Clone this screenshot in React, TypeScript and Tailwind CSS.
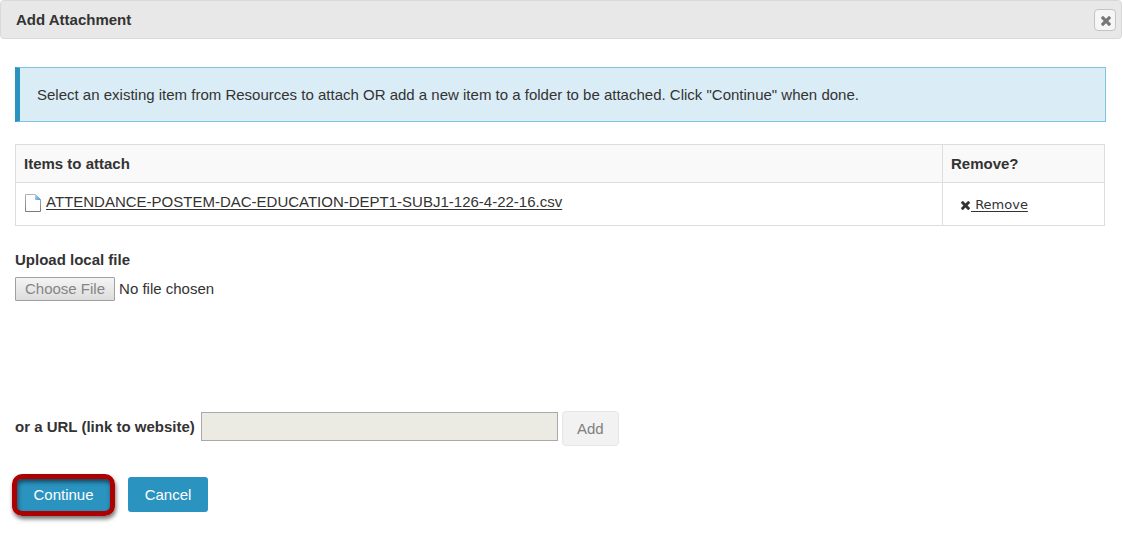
import { useState } from "react";

function CrossIcon({ className }: { className: string }) {
  return (
    <svg viewBox="302 366 1188 1188" fill="currentColor" aria-hidden="true" className={className}>
      <path d="M1490 1322q0 40-28 68l-136 136q-28 28-68 28t-68-28l-294-294-294 294q-28 28-68 28t-68-28l-136-136q-28-28-28-68t28-68l294-294-294-294q-28-28-28-68t28-68l136-136q28-28 68-28t68 28l294 294 294-294q28-28 68-28t68 28l136 136q28 28 28 68t-28 68l-294 294 294 294q28 28 28 68z" />
    </svg>
  );
}

function FileIcon() {
  return (
    <svg viewBox="0 0 16 18" aria-hidden="true" className="h-[18px] w-4 shrink-0">
      <defs>
        <linearGradient id="page-edge" x1="0" y1="0" x2="0" y2="1">
          <stop offset="0" stopColor="#b4b4b4" />
          <stop offset="1" stopColor="#7c7c7c" />
        </linearGradient>
        <linearGradient id="page-fold" x1="0" y1="0" x2="1" y2="1">
          <stop offset="0" stopColor="#b9e0f7" />
          <stop offset="1" stopColor="#3f96d2" />
        </linearGradient>
      </defs>
      <path d="M0.5 0.5H10.5L15.5 5.5V17.5H0.5Z" fill="#fefefe" stroke="url(#page-edge)" />
      <path d="M10 0L16 6H11.2Q10 6 10 4.8Z" fill="url(#page-fold)" />
    </svg>
  );
}

export default function App() {
  const [url, setUrl] = useState("");

  return (
    <main className="bg-white pr-px font-['Liberation_Sans',Arial,sans-serif] text-[15px] leading-5 text-[#333]">
      <header className="flex h-[39px] items-center justify-between rounded-[4px] border border-[#d9d9d9] bg-[#e8e8e8] pr-[5px] pl-[15px]">
        <h1 className="font-bold">Add Attachment</h1>
        <button
          type="button"
          aria-label="Close"
          className="flex size-[22px] items-center justify-center rounded-[4px] border border-[#c4c4c4] bg-[#f6f6f6] pt-0.5 pl-0.5 text-[#777]"
        >
          <CrossIcon className="size-2.5" />
        </button>
      </header>

      <div className="px-[15px] pt-7">
        <p className="mr-px border border-l-[5px] border-[#7fc4e3] border-l-[#2a93c0] bg-[#daedf6] px-[17px] py-[17px] leading-[19px]">
          Select an existing item from Resources to attach OR add a new item to a folder to be attached. Click
          "Continue" when done.
        </p>

        <div className="mt-[22px] pr-[2px]">
          <table className="w-full border-collapse border border-[#ddd]">
            <thead>
              <tr className="h-[38px] bg-[#f9f9f9] text-left">
                <th scope="col" className="border border-[#ddd] px-2">Items to attach</th>
                <th scope="col" className="w-[162px] border border-[#ddd] px-2">Remove?</th>
              </tr>
            </thead>
            <tbody>
              <tr className="h-[43px]">
                <td className="border border-[#ddd] px-[9px]">
                  <div className="flex items-start gap-[5px] pb-1">
                    <span className="pt-0.5"><FileIcon /></span>
                    <a href="#file" className="underline underline-offset-2">
                      ATTENDANCE-POSTEM-DAC-EDUCATION-DEPT1-SUBJ1-126-4-22-16.csv
                    </a>
                  </div>
                </td>
                <td className="border border-[#ddd] px-[18px] pt-0.5">
                  <a
                    href="#remove"
                    className="flex items-center font-['DejaVu_Sans',Verdana,sans-serif] text-[13px] underline underline-offset-2"
                  >
                    <CrossIcon className="mr-px size-[9px]" />
                    <span className="whitespace-pre"> Remove</span>
                  </a>
                </td>
              </tr>
            </tbody>
          </table>
        </div>

        <label htmlFor="upload" className="mt-6 block font-bold">Upload local file</label>
        <input
          id="upload"
          type="file"
          className="mt-[7px] block h-6 w-80 leading-[22px] file:mr-1 file:h-6 file:rounded-[1px] file:border file:border-solid file:border-[#a0a0a0] file:bg-linear-to-b file:from-[#f4f4f4] file:to-[#dddddd] file:px-[9px] file:text-[15px] file:leading-[22px] file:text-[#858585]"
        />

        <div className="mt-[110px] flex items-center gap-1">
          <label htmlFor="url" className="pr-0.5 pb-1 font-bold">or a URL (link to website)</label>
          <input
            id="url"
            type="text"
            value={url}
            onChange={(event) => setUrl(event.target.value)}
            className="mb-1 h-[29px] w-[357px] border border-[#a9a9a9] bg-[#ebebe4] px-2"
          />
          <button
            type="button"
            disabled
            className="h-[35px] w-[57px] rounded-[4px] border border-[#e6e6e6] bg-[#f2f2f2] text-[#808080]"
          >
            Add
          </button>
        </div>

        <div className="mt-[31px] flex gap-4 pb-7 text-white">
          <div className="relative">
            <button type="button" className="h-[35px] w-[97px] rounded-[3px] bg-[#2a93c0]">Continue</button>
            <span className="pointer-events-none absolute -inset-x-[3px] -top-[3px] -bottom-1 rounded-[10px] border-[5px] border-[#ad0000] shadow-[1px_3px_4px_rgba(0,0,0,0.55),inset_1px_3px_4px_rgba(0,0,0,0.5)]" />
          </div>
          <button type="button" className="h-[35px] w-20 rounded-[3px] bg-[#2a93c0]">Cancel</button>
        </div>
      </div>
    </main>
  );
}
